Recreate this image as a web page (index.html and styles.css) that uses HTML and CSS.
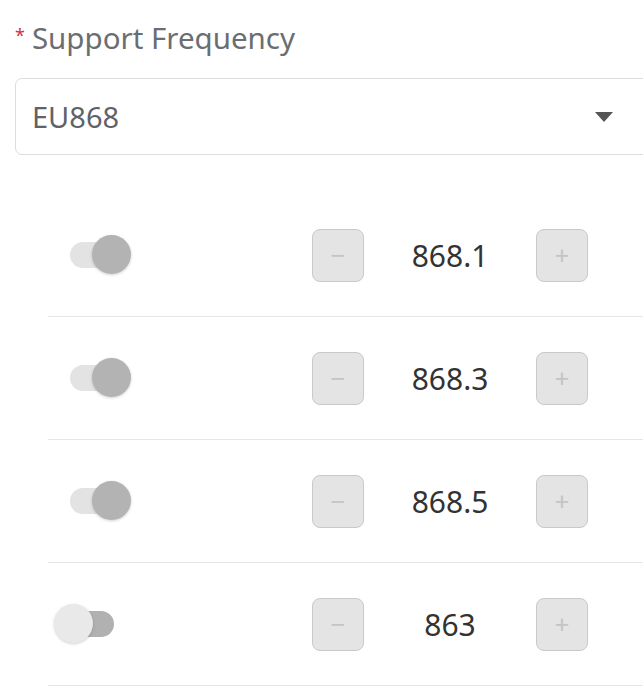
FILE: index.html
```html
<!DOCTYPE html>
<html lang="en">
<head>
    <meta charset="UTF-8">
    <meta name="viewport" content="width=device-width, initial-scale=1.0">
    <title>Support Frequency</title>
    <link rel="stylesheet" href="styles.css">
</head>
<body>
    <div class="form-item">
        <label class="field-label"><span class="required">*</span>Support Frequency</label>
        <div class="select">
            <span class="select-value">EU868</span>
            <span class="select-arrow"></span>
        </div>
    </div>

    <div class="channel-list">
        <div class="channel">
            <div class="switch on"><span class="track"></span><span class="knob"></span></div>
            <div class="stepper">
                <button class="step-btn">&minus;</button>
                <span class="step-value">868.1</span>
                <button class="step-btn">+</button>
            </div>
        </div>
        <div class="channel">
            <div class="switch on"><span class="track"></span><span class="knob"></span></div>
            <div class="stepper">
                <button class="step-btn">&minus;</button>
                <span class="step-value">868.3</span>
                <button class="step-btn">+</button>
            </div>
        </div>
        <div class="channel">
            <div class="switch on"><span class="track"></span><span class="knob"></span></div>
            <div class="stepper">
                <button class="step-btn">&minus;</button>
                <span class="step-value">868.5</span>
                <button class="step-btn">+</button>
            </div>
        </div>
        <div class="channel">
            <div class="switch"><span class="track"></span><span class="knob"></span></div>
            <div class="stepper">
                <button class="step-btn">&minus;</button>
                <span class="step-value">863</span>
                <button class="step-btn">+</button>
            </div>
        </div>
    </div>
</body>
</html>
```

FILE: styles.css
```css
body {
    margin: 0;
    background: #fff;
    font-family: "Noto Sans", Arial, sans-serif;
    overflow: hidden;
}
.form-item {
    padding: 19px 0 0 15px;
}
.field-label {
    display: block;
    font-size: 29.5px;
    line-height: 38px;
    color: #6a6e72;
}
.required {
    position: relative;
    top: -7px;
    color: #d2313d;
    font-size: 18px;
    margin-right: 7px;
}
.select {
    display: flex;
    align-items: center;
    width: 660px;
    height: 77px;
    margin-top: 17px;
    border: 1px solid #ddd;
    border-radius: 7px;
    box-sizing: border-box;
    padding-left: 16px;
}
.select-value {
    font-size: 29px;
    color: #5f6368;
}
.select-arrow {
    margin-left: 476px;
    width: 0;
    height: 0;
    border-left: 9px solid transparent;
    border-right: 9px solid transparent;
    border-top: 10px solid #555;
}
.channel-list {
    margin-top: 39px;
    margin-left: 48px;
}
.channel {
    display: flex;
    align-items: center;
    height: 122px;
    border-bottom: 1px solid #e6e6e6;
    padding-left: 6px;
}
.switch {
    position: relative;
    width: 77px;
    height: 40px;
}
.track {
    position: absolute;
    left: 16px;
    top: 7px;
    width: 44px;
    height: 26px;
    border-radius: 13px;
    background: #b1b1b1;
}
.knob {
    position: absolute;
    left: 0;
    top: 0;
    width: 39px;
    height: 39px;
    border-radius: 50%;
    background: #e9e9e9;
    box-shadow: 0 1px 3px rgba(0, 0, 0, 0.18);
}
.switch.on .track {
    background: #e3e3e3;
}
.switch.on .knob {
    left: 38px;
    background: #b3b3b3;
}
.stepper {
    display: flex;
    align-items: center;
    margin-left: 181px;
}
.step-btn {
    width: 52px;
    height: 53px;
    padding: 0;
    border: 1px solid #c9c9c9;
    border-radius: 8px;
    background: #e4e4e4;
    color: #c4c4c4;
    font-family: "Noto Sans", Arial, sans-serif;
    font-size: 26px;
    line-height: 1;
}
.step-value {
    width: 172px;
    text-align: center;
    font-size: 30px;
    color: #333;
}
```
